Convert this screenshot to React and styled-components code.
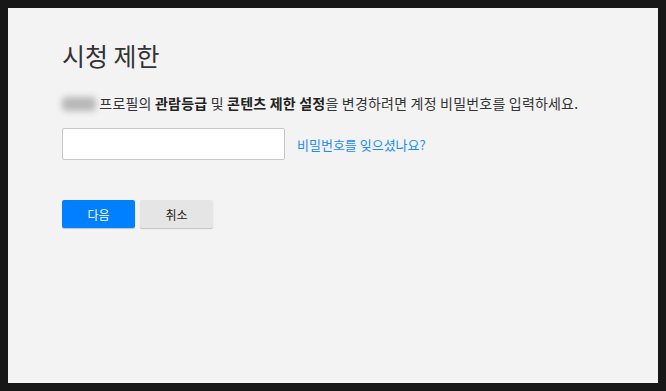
import styled, { createGlobalStyle } from "styled-components";

const Global = createGlobalStyle`
  body {
    margin: 8px;
    background: #171717;
    font-family: "Noto Sans CJK KR", "Noto Sans", sans-serif;
  }
`;

export default function App() {
  return (
    <>
      <Global />
      <Panel>
        <Title>시청 제한</Title>
        <Desc>
          <Blurred aria-hidden="true" /> 프로필의 <b>관람등급</b> 및{" "}
          <b>콘텐츠 제한 설정</b>을 변경하려면 계정 비밀번호를 입력하세요.
        </Desc>
        <Row>
          <Input type="password" />
          <Link href="#">비밀번호를 잊으셨나요?</Link>
        </Row>
        <Buttons>
          <Button primary>다음</Button>
          <Button>취소</Button>
        </Buttons>
      </Panel>
    </>
  );
}

const Panel = styled.div`
  height: 375px;
  box-sizing: border-box;
  background: #f3f3f3;
  padding: 31px 54px;
  color: #333;
`;

const Title = styled.h1`
  margin: 0;
  font-size: 25px;
  font-weight: 400;
  line-height: 32px;
  color: #333;
`;

const Desc = styled.p`
  margin: 22px 0 0;
  font-size: 14px;
  line-height: 20px;
  letter-spacing: 0.2px;
  color: #333;
  b {
    font-weight: 700;
    color: #222;
  }
`;

const Blurred = styled.span`
  display: inline-block;
  width: 34px;
  height: 14px;
  vertical-align: -2px;
  background: #b8b8b8;
  border-radius: 4px;
  filter: blur(3px);
`;

const Row = styled.div`
  display: flex;
  align-items: center;
  gap: 12px;
  margin-top: 15px;
`;

const Input = styled.input`
  width: 223px;
  height: 32px;
  box-sizing: border-box;
  background: #fff;
  border: 1px solid #c8c8c8;
  border-radius: 2px;
  outline: none;
`;

const Link = styled.a`
  font-size: 13px;
  color: #1a8cff;
  text-decoration: none;
`;

const Buttons = styled.div`
  display: flex;
  gap: 5px;
  margin-top: 40px;
`;

const Button = styled.button`
  width: 73px;
  height: 28px;
  border: none;
  border-radius: 2px;
  font-family: inherit;
  font-size: 12px;
  cursor: pointer;
  background: ${(p) => (p.primary ? "#0080ff" : "#e5e5e5")};
  color: ${(p) => (p.primary ? "#fff" : "#222")};
  box-shadow: 0 1px 1px rgba(0, 0, 0, 0.2);
`;
